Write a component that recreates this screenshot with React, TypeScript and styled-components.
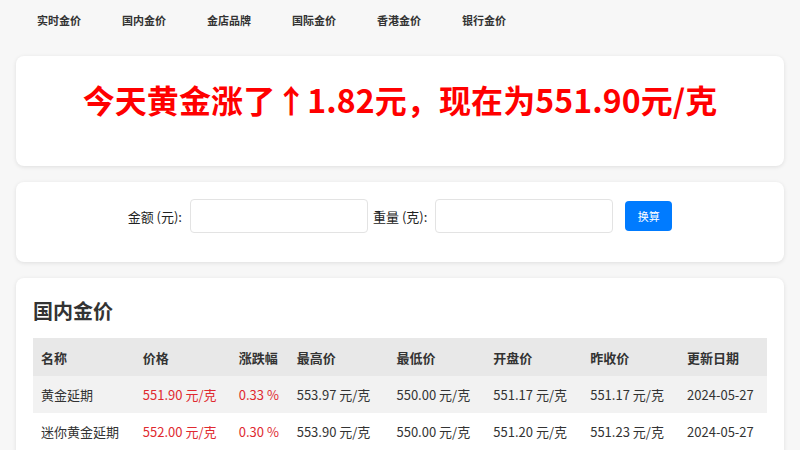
import React from 'react'
import styled, { createGlobalStyle } from 'styled-components'

const GlobalStyle = createGlobalStyle`
  html, body {
    margin: 0;
    padding: 0;
    background: #f7f7f7;
    font-family: 'Noto Sans CJK SC', 'Noto Sans', sans-serif;
    color: #333;
  }
`

const Page = styled.div`
  padding: 0 16px;
`

const Nav = styled.nav`
  display: flex;
  height: 40px;
  align-items: center;
`

const NavLink = styled.a`
  display: block;
  width: 85px;
  padding-left: 21px;
  box-sizing: border-box;
  font-size: 11px;
  font-weight: 700;
  color: #333;
  text-decoration: none;
`

const Card = styled.section<{ $pad: string }>`
  background: #fff;
  border-radius: 8px;
  box-shadow: 0 1px 4px rgba(0, 0, 0, 0.1);
  padding: ${p => p.$pad};
  margin-top: 16px;
`

const Headline = styled.h1`
  margin: 0;
  text-align: center;
  font-size: 32px;
  letter-spacing: 0.1px;
  line-height: 48px;
  font-weight: 700;
  color: #f00;
`

const Form = styled.div`
  display: flex;
  align-items: center;
  justify-content: center;
  font-size: 13px;
  color: #222;
`

const Label = styled.label<{ $gap?: number }>`
  margin-right: 8px;
  margin-left: ${p => p.$gap ?? 0}px;
`

const Input = styled.input`
  width: 178px;
  height: 34px;
  box-sizing: border-box;
  border: 1px solid #e3e3e3;
  border-radius: 4px;
  outline: none;
`

const Button = styled.button`
  margin-left: 12px;
  width: 47px;
  height: 30px;
  border: none;
  border-radius: 4px;
  background: #007bff;
  color: #fff;
  font-family: inherit;
  font-size: 11px;
`

const Title = styled.h2`
  margin: 0 0 12px;
  font-size: 20px;
  line-height: 30px;
  font-weight: 600;
  color: #333;
`

const Table = styled.table`
  width: 100%;
  border-collapse: collapse;
  font-size: 13px;
`

const Th = styled.th`
  background: #e8e8e8;
  height: 38px;
  padding: 0 8px;
  text-align: left;
  font-weight: 600;
`

const Row = styled.tr`
  &:nth-child(odd) {
    background: #f2f2f2;
  }
`

const Td = styled.td<{ $up?: boolean }>`
  height: 37px;
  padding: 0 8px;
  color: ${p => (p.$up ? '#e0292f' : '#333')};
  white-space: nowrap;
`

const navItems = ['实时金价', '国内金价', '金店品牌', '国际金价', '香港金价', '银行金价']

const headers = ['名称', '价格', '涨跌幅', '最高价', '最低价', '开盘价', '昨收价', '更新日期']
const widths = [102, 96, 58, 100, 97, 97, 97, 88]

const rows = [
  ['黄金延期', '551.90 元/克', '0.33 %', '553.97 元/克', '550.00 元/克', '551.17 元/克', '551.17 元/克', '2024-05-27'],
  ['迷你黄金延期', '552.00 元/克', '0.30 %', '553.90 元/克', '550.00 元/克', '551.20 元/克', '551.23 元/克', '2024-05-27'],
]

export default function App() {
  return (
    <>
      <GlobalStyle />
      <Page>
        <Nav>
          {navItems.map(n => (
            <NavLink key={n} href="#">{n}</NavLink>
          ))}
        </Nav>
        <Card $pad="19px 20px 43px">
          <Headline>今天黄金涨了↑1.82元，现在为551.90元/克</Headline>
        </Card>
        <Card $pad="17px 20px 29px">
          <Form>
            <Label>金额 (元):</Label>
            <Input />
            <Label $gap={5}>重量 (克):</Label>
            <Input />
            <Button>换算</Button>
          </Form>
        </Card>
        <Card $pad="18px 17px 20px">
          <Title>国内金价</Title>
          <Table>
            <colgroup>
              {widths.map((w, i) => (
                <col key={i} style={{ width: w }} />
              ))}
            </colgroup>
            <thead>
              <tr>
                {headers.map(h => (
                  <Th key={h}>{h}</Th>
                ))}
              </tr>
            </thead>
            <tbody>
              {rows.map(r => (
                <Row key={r[0]}>
                  {r.map((c, i) => (
                    <Td key={i} $up={i === 1 || i === 2}>{c}</Td>
                  ))}
                </Row>
              ))}
            </tbody>
          </Table>
        </Card>
      </Page>
    </>
  )
}
